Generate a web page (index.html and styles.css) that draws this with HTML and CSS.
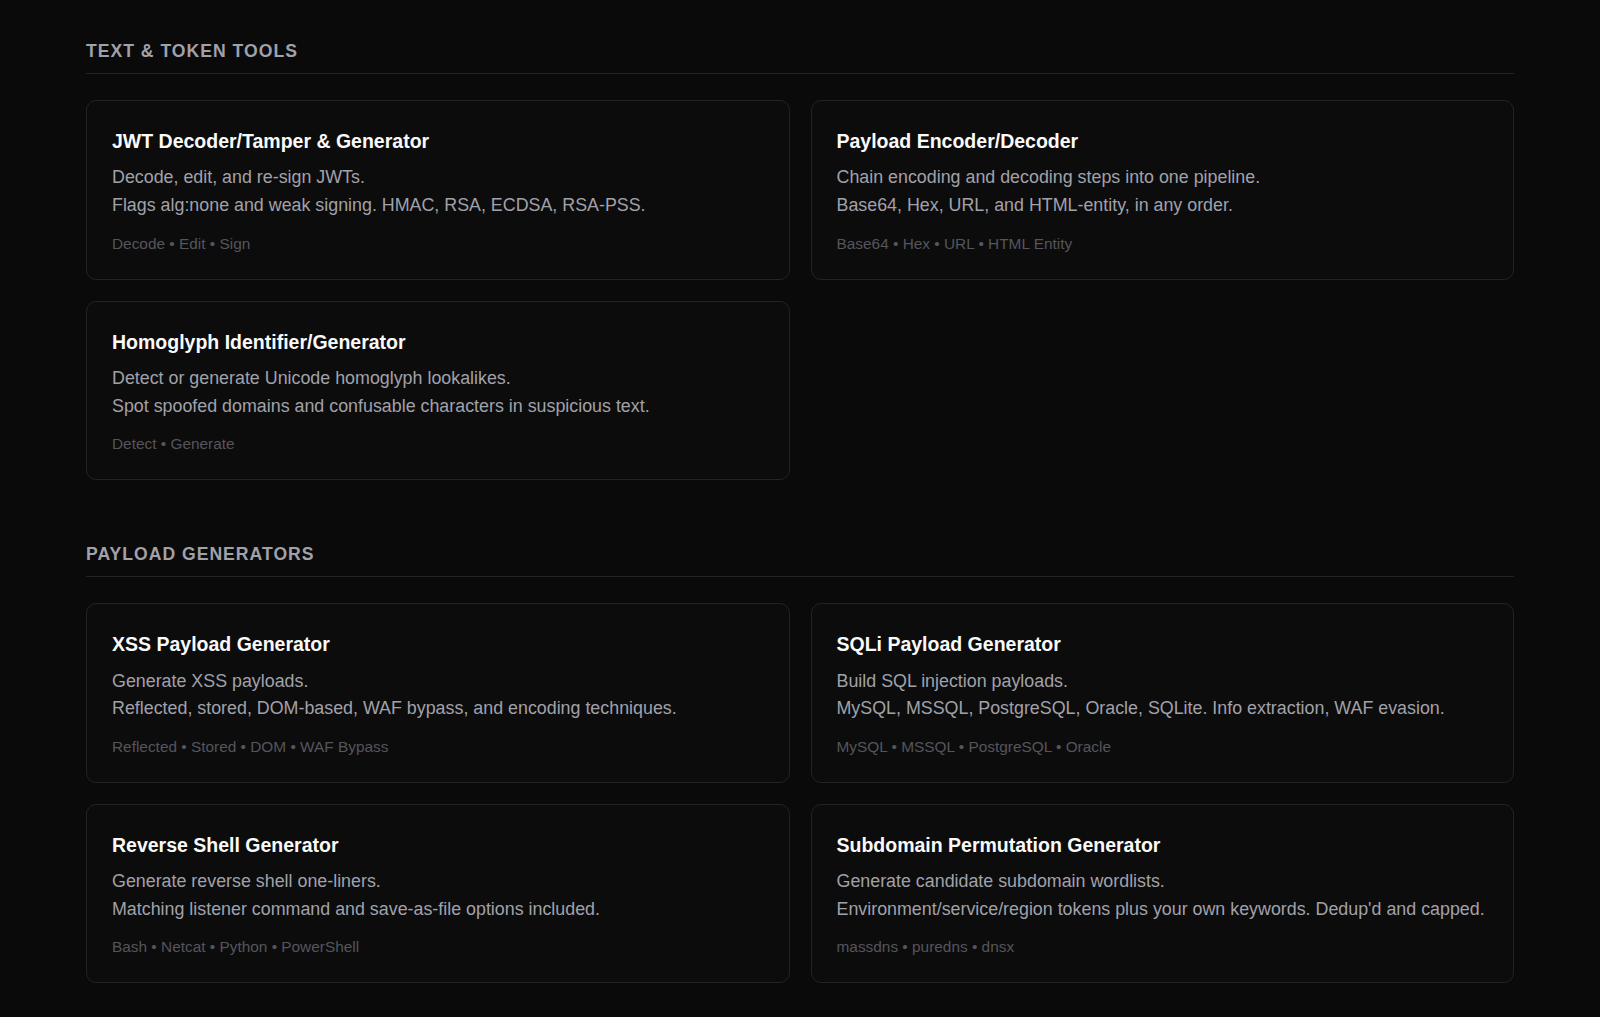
FILE: index.html
```html
<!DOCTYPE html>
<html lang="en">
<head>
    <meta charset="UTF-8">
    <meta name="viewport" content="width=device-width, initial-scale=1.0">
    <title>Tools</title>
    <link rel="stylesheet" href="styles.css">
</head>
<body>
    <div class="container">
        <div class="section">
            <h2 class="section-title">Text &amp; Token Tools</h2>
            <div class="grid">
                <div class="card">
                    <h3>JWT Decoder/Tamper &amp; Generator</h3>
                    <p class="desc">Decode, edit, and re-sign JWTs.<br>Flags alg:none and weak signing. HMAC, RSA, ECDSA, RSA-PSS.</p>
                    <div class="tags">Decode • Edit • Sign</div>
                </div>
                <div class="card">
                    <h3>Payload Encoder/Decoder</h3>
                    <p class="desc">Chain encoding and decoding steps into one pipeline.<br>Base64, Hex, URL, and HTML-entity, in any order.</p>
                    <div class="tags">Base64 • Hex • URL • HTML Entity</div>
                </div>
                <div class="card">
                    <h3>Homoglyph Identifier/Generator</h3>
                    <p class="desc">Detect or generate Unicode homoglyph lookalikes.<br>Spot spoofed domains and confusable characters in suspicious text.</p>
                    <div class="tags">Detect • Generate</div>
                </div>
            </div>
        </div>

        <div class="section">
            <h2 class="section-title">Payload Generators</h2>
            <div class="grid">
                <div class="card">
                    <h3>XSS Payload Generator</h3>
                    <p class="desc">Generate XSS payloads.<br>Reflected, stored, DOM-based, WAF bypass, and encoding techniques.</p>
                    <div class="tags">Reflected • Stored • DOM • WAF Bypass</div>
                </div>
                <div class="card">
                    <h3>SQLi Payload Generator</h3>
                    <p class="desc">Build SQL injection payloads.<br>MySQL, MSSQL, PostgreSQL, Oracle, SQLite. Info extraction, WAF evasion.</p>
                    <div class="tags">MySQL • MSSQL • PostgreSQL • Oracle</div>
                </div>
                <div class="card">
                    <h3>Reverse Shell Generator</h3>
                    <p class="desc">Generate reverse shell one-liners.<br>Matching listener command and save-as-file options included.</p>
                    <div class="tags">Bash • Netcat • Python • PowerShell</div>
                </div>
                <div class="card">
                    <h3>Subdomain Permutation Generator</h3>
                    <p class="desc">Generate candidate subdomain wordlists.<br>Environment/service/region tokens plus your own keywords. Dedup'd and capped.</p>
                    <div class="tags">massdns • puredns • dnsx</div>
                </div>
            </div>
        </div>
    </div>
</body>
</html>
```

FILE: styles.css
```css
body {
    margin: 0;
    background: #0a0a0a;
    font-family: "Liberation Sans", Arial, sans-serif;
    color: #a1a1aa;
}
.container {
    width: 1428px;
    margin: 0 auto;
    padding: 41px 0 34px;
}
.section {
    margin-bottom: 64px;
}
.section:last-child {
    margin-bottom: 0;
}
.section-title {
    margin: 0 0 26px;
    padding-bottom: 11px;
    border-bottom: 1px solid #232326;
    font-size: 17.6px;
    font-weight: bold;
    letter-spacing: 1px;
    text-transform: uppercase;
    color: #a1a1aa;
}
.grid {
    display: grid;
    grid-template-columns: 1fr 1fr;
    gap: 21px;
}
.card {
    background: #0c0c0c;
    border: 1px solid #232326;
    border-radius: 10px;
    padding: 27px 25px 26px;
}
.card h3 {
    margin: 0 0 9px;
    font-size: 19.5px;
    line-height: 1.4;
    font-weight: bold;
    color: #fafafa;
}
.desc {
    margin: 0 0 15px;
    font-size: 17.85px;
    line-height: 1.55;
    color: #a1a1aa;
}
.tags {
    font-size: 15.4px;
    color: #55555c;
}
```
